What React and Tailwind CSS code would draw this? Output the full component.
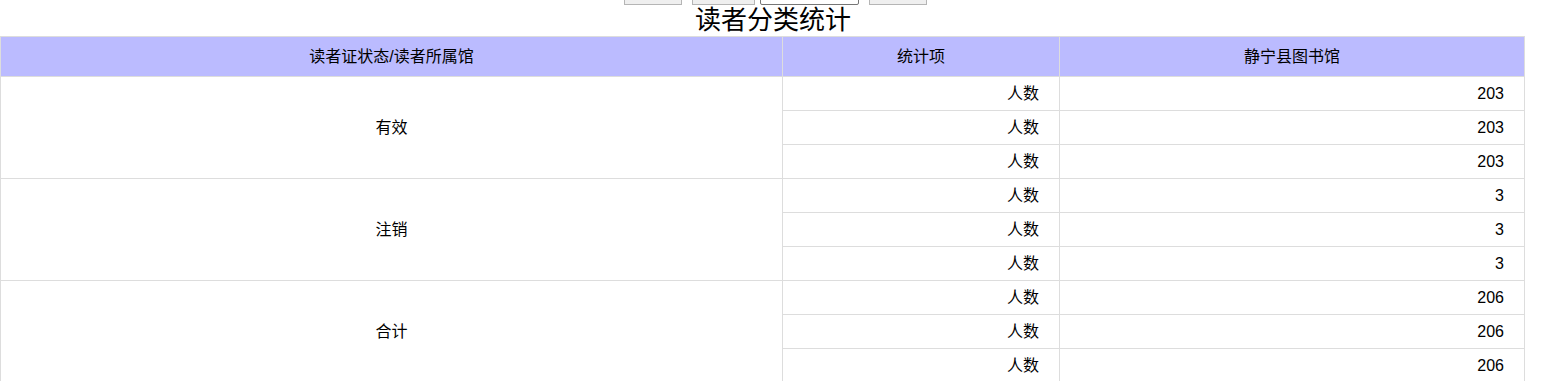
import React from "react";

const groups = [
  { name: "有效", values: ["203", "203", "203"] },
  { name: "注销", values: ["3", "3", "3"] },
  { name: "合计", values: ["206", "206", "206"] },
];

const App = () => {
  return (
    <div
      className="w-[1546px] bg-white text-black"
      style={{ fontFamily: '"Liberation Sans", "Noto Sans CJK SC", sans-serif' }}
    >
      {/* 顶部按钮（被截掉一部分） */}
      <div className="flex h-[5px] items-end justify-center overflow-hidden">
        <div className="flex items-end pl-[4px]">
          <button className="h-[22px] w-[58px] border border-[#b5b5b5] bg-[#efefef]" />
          <button className="ml-[10px] h-[22px] w-[63px] border border-[#b5b5b5] bg-[#efefef]" />
          <div className="ml-[5px] h-[22px] w-[99px] rounded-[2px] border border-[#767676] bg-white" />
          <button className="ml-[10px] h-[22px] w-[58px] border border-[#b5b5b5] bg-[#efefef]" />
        </div>
      </div>
      <h1 className="h-[31px] text-center text-[26px] leading-[31px]">读者分类统计</h1>
      <table className="w-[1524px] table-fixed border-collapse text-[16px]">
        <colgroup>
          <col className="w-[782px]" />
          <col className="w-[277px]" />
          <col className="w-[465px]" />
        </colgroup>
        <thead>
          <tr className="h-[40px] bg-[#bbbbff]">
            <th className="border border-[#dddddd] font-normal">读者证状态/读者所属馆</th>
            <th className="border border-[#dddddd] font-normal">统计项</th>
            <th className="border border-[#dddddd] font-normal">静宁县图书馆</th>
          </tr>
        </thead>
        <tbody>
          {groups.map((g) =>
            g.values.map((v, i) => (
              <tr key={g.name + i} className="h-[34px]">
                {i === 0 && (
                  <td rowSpan={3} className="border border-[#dddddd] text-center">
                    {g.name}
                  </td>
                )}
                <td className="border border-[#dddddd] pr-[20px] text-right">人数</td>
                <td className="border border-[#dddddd] pr-[20px] text-right">{v}</td>
              </tr>
            ))
          )}
        </tbody>
      </table>
    </div>
  );
};

export default App;
